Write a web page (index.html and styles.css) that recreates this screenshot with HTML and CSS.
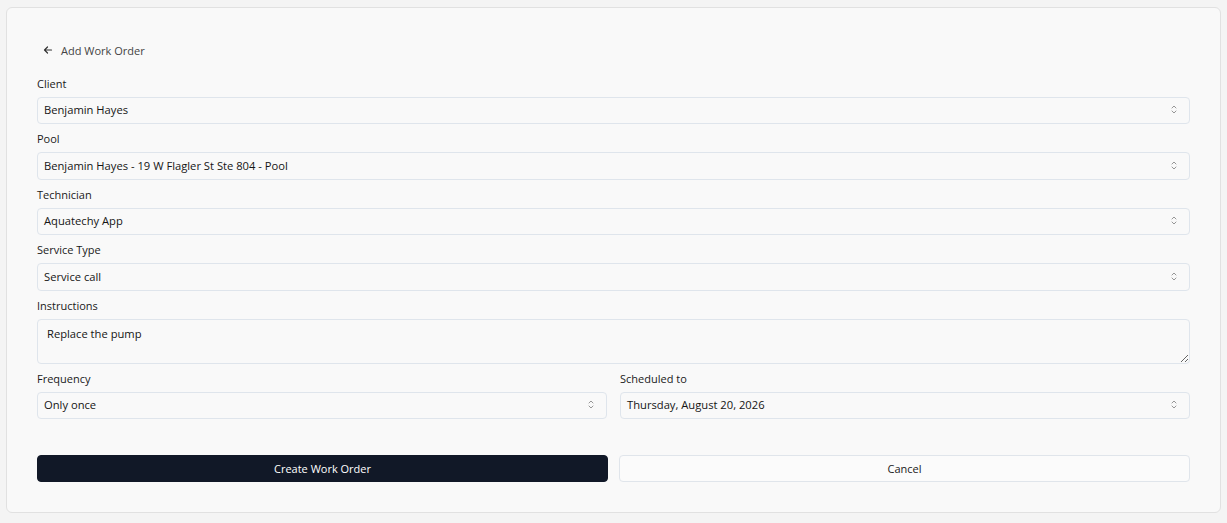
FILE: index.html
```html
<!DOCTYPE html>
<html lang="en">
<head>
<meta charset="utf-8">
<title>Add Work Order</title>
<link rel="stylesheet" href="styles.css">
</head>
<body>
<main class="card">
  <header class="title">
    <svg class="back" width="10" height="10" viewBox="0 0 10 10" fill="none" stroke="#333" stroke-width="1.2" stroke-linecap="round" stroke-linejoin="round"><path d="M8.5 5H1.5M4.5 2L1.5 5L4.5 8"/></svg>
    <span>Add Work Order</span>
  </header>

  <div class="field">
    <label class="label">Client</label>
    <div class="select"><span>Benjamin Hayes</span><svg class="chev" width="6" height="9" viewBox="0 0 6 9" fill="none" stroke="#8a8a8a" stroke-width="0.9" stroke-linecap="round" stroke-linejoin="round"><path d="M1 3L3 1L5 3M1 6L3 8L5 6"/></svg></div>
  </div>
  <div class="field">
    <label class="label">Pool</label>
    <div class="select"><span>Benjamin Hayes - 19 W Flagler St Ste 804 - Pool</span><svg class="chev" width="6" height="9" viewBox="0 0 6 9" fill="none" stroke="#8a8a8a" stroke-width="0.9" stroke-linecap="round" stroke-linejoin="round"><path d="M1 3L3 1L5 3M1 6L3 8L5 6"/></svg></div>
  </div>
  <div class="field">
    <label class="label">Technician</label>
    <div class="select"><span>Aquatechy App</span><svg class="chev" width="6" height="9" viewBox="0 0 6 9" fill="none" stroke="#8a8a8a" stroke-width="0.9" stroke-linecap="round" stroke-linejoin="round"><path d="M1 3L3 1L5 3M1 6L3 8L5 6"/></svg></div>
  </div>
  <div class="field">
    <label class="label">Service Type</label>
    <div class="select"><span>Service call</span><svg class="chev" width="6" height="9" viewBox="0 0 6 9" fill="none" stroke="#8a8a8a" stroke-width="0.9" stroke-linecap="round" stroke-linejoin="round"><path d="M1 3L3 1L5 3M1 6L3 8L5 6"/></svg></div>
  </div>
  <div class="field">
    <label class="label">Instructions</label>
    <textarea class="textarea">Replace the pump</textarea>
  </div>
  <div class="row">
    <div class="field">
      <label class="label">Frequency</label>
      <div class="select"><span>Only once</span><svg class="chev" width="6" height="9" viewBox="0 0 6 9" fill="none" stroke="#8a8a8a" stroke-width="0.9" stroke-linecap="round" stroke-linejoin="round"><path d="M1 3L3 1L5 3M1 6L3 8L5 6"/></svg></div>
    </div>
    <div class="field">
      <label class="label">Scheduled to</label>
      <div class="select"><span>Thursday, August 20, 2026</span><svg class="chev" width="6" height="9" viewBox="0 0 6 9" fill="none" stroke="#8a8a8a" stroke-width="0.9" stroke-linecap="round" stroke-linejoin="round"><path d="M1 3L3 1L5 3M1 6L3 8L5 6"/></svg></div>
    </div>
  </div>
  <div class="actions">
    <button class="btn primary">Create Work Order</button>
    <button class="btn outline">Cancel</button>
  </div>
</main>
</body>
</html>
```

FILE: styles.css
```css
* { box-sizing: border-box; }
html, body { height: 100%; }
body {
  margin: 0;
  padding: 7px 6px 9px 6px;
  background: #f4f4f4;
  font-family: "Open Sans", "Liberation Sans", sans-serif;
  color: #151515;
}
.card {
  background: #f9f9f9;
  border: 1px solid #e1e1e1;
  border-radius: 6px;
  padding: 33.5px 30px 30px 30px;
  display: flex;
  flex-direction: column;
  gap: 8px;
}
.title {
  display: flex;
  align-items: center;
  gap: 8px;
  height: 18px;
  padding-left: 6px;
  padding-bottom: 1px;
  font-size: 11px;
  color: #444;
  margin-bottom: 9px;
}
.field {
  display: flex;
  flex-direction: column;
  gap: 7px;
}
.label {
  font-size: 11px;
  line-height: 13px;
  color: #1a1a1a;
}
.select {
  height: 27.5px;
  border: 1px solid #dfe5ec;
  border-radius: 4px;
  background: #f9f9f9;
  display: flex;
  align-items: center;
  justify-content: space-between;
  padding: 0 12px 1px 6px;
  font-size: 11.2px;
  color: #151515;
}
.textarea {
  height: 45px;
  border: 1px solid #dfe5ec;
  border-radius: 4px;
  background: #f9f9f9;
  font-family: inherit;
  font-size: 11.2px;
  color: #151515;
  padding: 6px 9px;
  resize: vertical;
  outline: none;
}
.row {
  display: grid;
  grid-template-columns: 1fr 1fr;
  gap: 13px;
}
.actions {
  display: grid;
  grid-template-columns: 1fr 1fr;
  gap: 11px;
  margin-top: 27.5px;
}
.btn {
  height: 27px;
  border-radius: 4px;
  font-family: inherit;
  font-size: 11px;
  cursor: pointer;
}
.primary {
  background: #111827;
  color: #fff;
  border: 1px solid #111827;
  font-weight: 500;
}
.outline {
  background: #fbfbfb;
  color: #1a1a1a;
  border: 1px solid #e0e5eb;
}
```
